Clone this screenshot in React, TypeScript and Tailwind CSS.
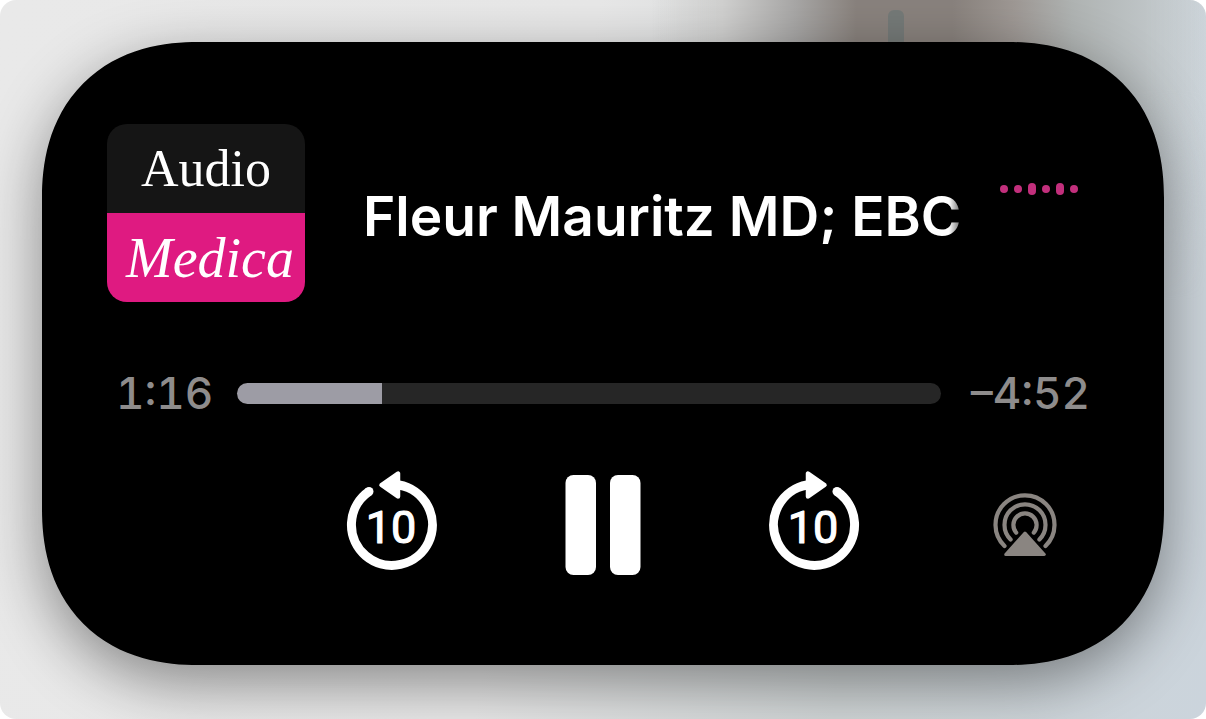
import { useState } from 'react';

const DURATION = 368;

const WAVE_BARS = ['h-2', 'h-2', 'h-3', 'h-2', 'h-3', 'h-2'];

function formatTime(seconds: number) {
  const minutes = Math.floor(seconds / 60);
  return `${minutes}:${String(seconds % 60).padStart(2, '0')}`;
}

function SkipIcon({ forward = false }: { forward?: boolean }) {
  return (
    <svg viewBox="-50 -60 100 110" className="h-[110px] w-[100px]" aria-hidden="true">
      <g transform={forward ? 'scale(-1 1)' : undefined}>
        <path
          d="M-23 -33.5A40.5 40.5 0 1 0 7 -40"
          fill="none"
          stroke="currentColor"
          strokeWidth="9"
        />
        <circle cx="-23" cy="-33.5" r="4.5" fill="currentColor" />
        <path
          d="M-10.5 -40L6 -51.5V-28.5Z"
          fill="currentColor"
          stroke="currentColor"
          strokeWidth="4.5"
          strokeLinejoin="round"
        />
      </g>
      <text
        x="-1"
        y="18"
        textAnchor="middle"
        fill="currentColor"
        stroke="currentColor"
        strokeWidth="1.2"
        strokeLinejoin="round"
        className="font-['Roboto',sans-serif] text-[45px]"
      >
        10
      </text>
    </svg>
  );
}

function PauseIcon() {
  return (
    <svg viewBox="0 0 76 100" className="h-[100px] w-[76px]" fill="currentColor" aria-hidden="true">
      <rect x="0.5" y="0" width="30.5" height="100" rx="8" />
      <rect x="45" y="0" width="30.5" height="100" rx="8" />
    </svg>
  );
}

function PlayIcon() {
  return (
    <svg viewBox="0 0 76 100" className="h-[100px] w-[76px]" fill="currentColor" aria-hidden="true">
      <path d="M4 8v84l70-42z" stroke="currentColor" strokeWidth="4" strokeLinejoin="round" />
    </svg>
  );
}

function AirPlayIcon() {
  return (
    <svg viewBox="-34 -34 68 68" className="size-[68px]" aria-hidden="true">
      <g fill="none" stroke="currentColor" strokeWidth="4.2" strokeLinecap="round">
        <path d="M-20.5 21A29.5 29.5 0 1 1 20.5 21" />
        <path d="M-14.4 14.4A20.5 20.5 0 1 1 14.4 14.4" />
        <path d="M-8.8 7.6A11.6 11.6 0 1 1 8.8 7.6" />
      </g>
      <path
        d="M0 8L19.3 29.5H-19.3Z"
        fill="currentColor"
        stroke="currentColor"
        strokeWidth="3"
        strokeLinejoin="round"
      />
    </svg>
  );
}

function Artwork() {
  return (
    <div className="flex h-[178px] w-[198px] shrink-0 flex-col overflow-hidden rounded-[20px] font-['Liberation_Serif',serif] text-white">
      <div className="flex flex-1 items-center justify-center bg-[#151515] text-[52px] leading-none">
        Audio
      </div>
      <div className="flex flex-1 items-center justify-center bg-[#df1a81] pl-2 text-[56px] leading-none italic">
        Medica
      </div>
    </div>
  );
}

function Waveform() {
  return (
    <div className="mt-[57px] flex h-4 items-center gap-[6px]" aria-hidden="true">
      {WAVE_BARS.map((height, i) => (
        <span key={i} className={`w-2 rounded-full bg-[#c22f7c] ${height}`} />
      ))}
    </div>
  );
}

// Soft backdrop: light on the left, bluish on the right, with a brown-grey haze along the top
function Backdrop() {
  return (
    <div
      className="absolute inset-0 bg-[linear-gradient(100deg,#e9e9e9_0%,#e8e8e8_45%,#d0d5d6_72%,#cbd4dc_100%)]"
      aria-hidden="true"
    >
      <div className="h-[300px] bg-[linear-gradient(90deg,transparent_54%,#d0d0cf_60%,#a8a7a6_66%,#89827d_71%,#89827d_79%,#9e9894_84%,#afb3b2_89%,#bec4c6_95%,transparent_100%)] [mask-image:linear-gradient(black_30%,transparent)]">
        <div className="absolute top-[10px] left-[74%] h-10 w-4 -translate-x-1 rounded-md bg-[#757a78]" />
      </div>
    </div>
  );
}

export default function App() {
  const [position, setPosition] = useState(76);
  const [playing, setPlaying] = useState(true);
  const percent = (position / DURATION) * 100;

  const skip = (delta: number) =>
    setPosition(p => Math.min(DURATION, Math.max(0, p + delta)));

  return (
    <div className="bg-white">
      <main className="relative min-h-screen overflow-hidden rounded-2xl p-[42px] pb-[54px] font-['Inter','Liberation_Sans',sans-serif]">
        <Backdrop />
        <section
          aria-label="Now playing"
          className="relative rounded-[156px] bg-black pt-[82px] pb-[90px] shadow-[0_18px_60px_rgba(0,0,0,0.42)] [corner-shape:superellipse(1.17)]"
        >
          <div className="flex items-start justify-between pr-[86px] pl-[65px]">
            <div className="flex items-start gap-[58px]">
              <Artwork />
              <h1 className="mt-16 [mask-image:linear-gradient(to_right,black_calc(100%-12px),transparent_calc(100%+8px))] text-[55px] leading-[56px] font-semibold whitespace-nowrap text-white">
                Fleur Mauritz MD; EBC
              </h1>
            </div>
            <Waveform />
          </div>

          <div className="mt-[63px] flex h-14 items-center gap-6 px-[74px] text-[44px] font-medium text-[#8e8c8c] tabular-nums">
            <span className="w-[97px]">{formatTime(position)}</span>
            <input
              type="range"
              aria-label="Playback position"
              min={0}
              max={DURATION}
              value={position}
              onChange={e => setPosition(Number(e.target.value))}
              className="h-[21px] min-w-0 flex-1 appearance-none rounded-full [&::-webkit-slider-thumb]:opacity-0"
              style={{
                background: `linear-gradient(to right, #9d9ca5 ${percent}%, #262626 ${percent}%)`,
              }}
            />
            <span className="w-[125px] text-right whitespace-nowrap">–{formatTime(DURATION - position)}</span>
          </div>

          <div className="mt-11 grid grid-cols-5 items-center justify-items-center px-[33px] text-white">
            <button type="button" aria-label="Back 10 seconds" className="col-start-2" onClick={() => skip(-10)}>
              <SkipIcon />
            </button>
            <button type="button" aria-label={playing ? 'Pause' : 'Play'} className="pt-[10px]" onClick={() => setPlaying(!playing)}>
              {playing ? <PauseIcon /> : <PlayIcon />}
            </button>
            <button type="button" aria-label="Forward 10 seconds" onClick={() => skip(10)}>
              <SkipIcon forward />
            </button>
            <button type="button" aria-label="AirPlay" className="pt-[10px] text-[#8a8581]">
              <AirPlayIcon />
            </button>
          </div>
        </section>
      </main>
    </div>
  );
}
